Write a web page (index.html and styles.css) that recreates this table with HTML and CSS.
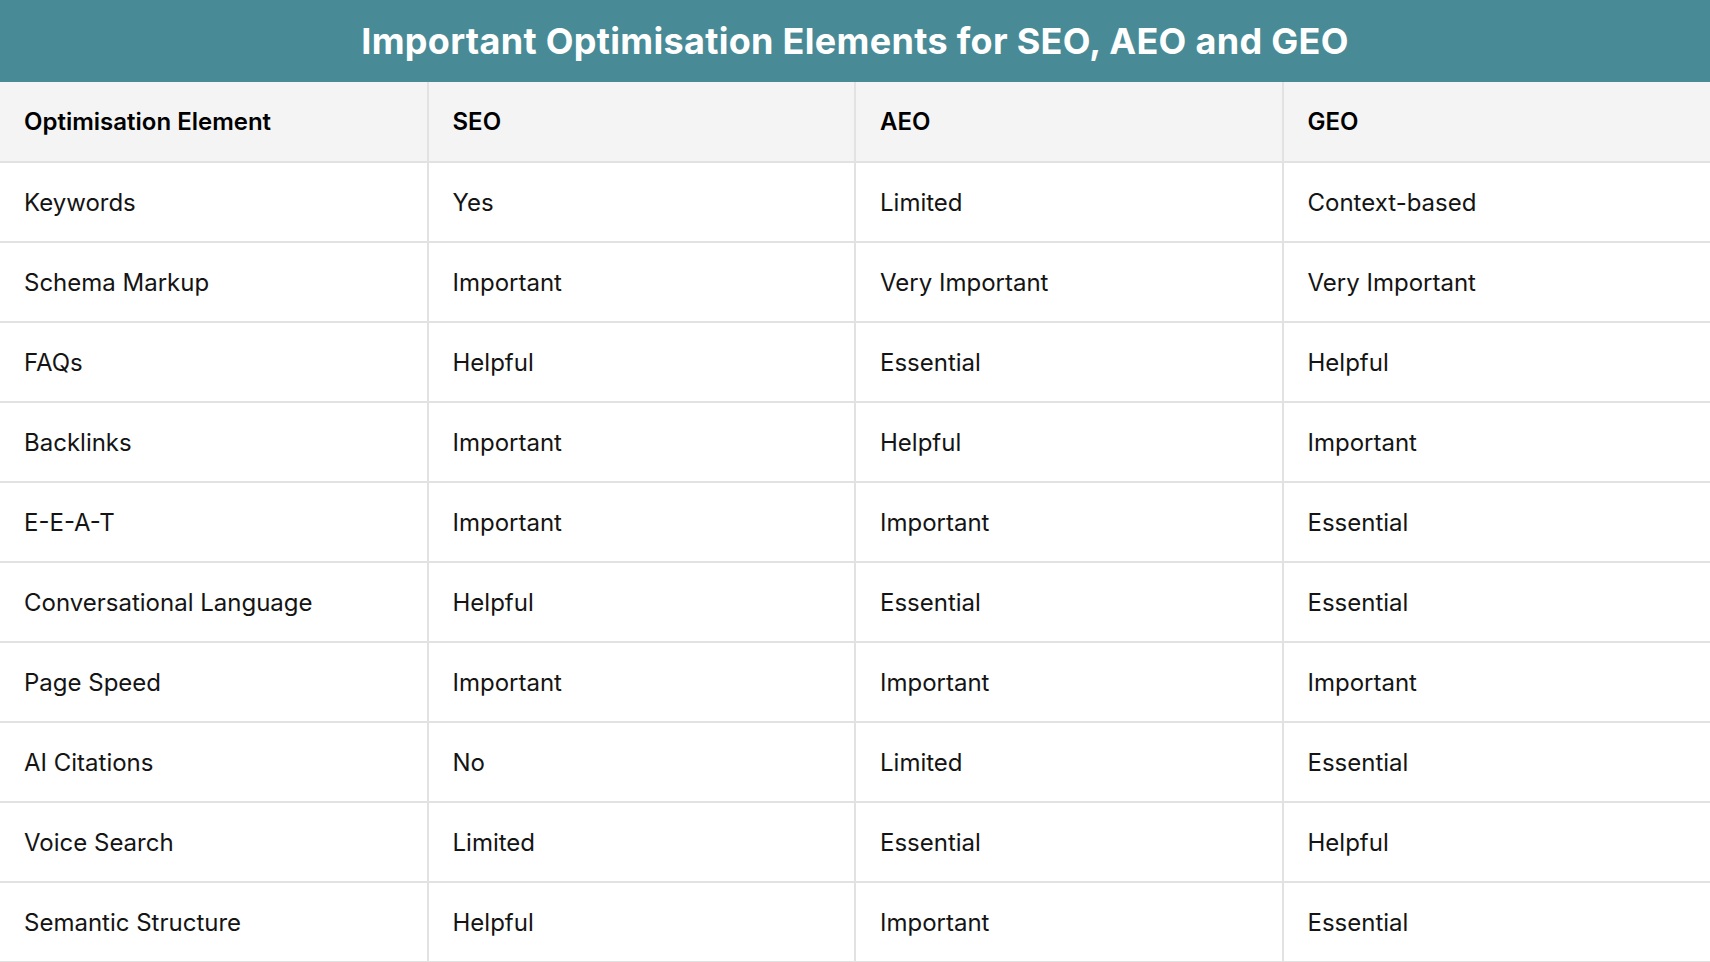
FILE: index.html
```html
<!DOCTYPE html>
<html lang="en">
<head>
<meta charset="utf-8">
<title>Important Optimisation Elements for SEO, AEO and GEO</title>
<link rel="stylesheet" href="styles.css">
</head>
<body>
<div class="page">
  <div class="title">Important Optimisation Elements for SEO, AEO and GEO</div>
  <table class="grid">
    <thead>
      <tr><th>Optimisation Element</th><th>SEO</th><th>AEO</th><th>GEO</th></tr>
    </thead>
    <tbody>
      <tr><td>Keywords</td><td>Yes</td><td>Limited</td><td>Context-based</td></tr>
      <tr><td>Schema Markup</td><td>Important</td><td>Very Important</td><td>Very Important</td></tr>
      <tr><td>FAQs</td><td>Helpful</td><td>Essential</td><td>Helpful</td></tr>
      <tr><td>Backlinks</td><td>Important</td><td>Helpful</td><td>Important</td></tr>
      <tr><td>E-E-A-T</td><td>Important</td><td>Important</td><td>Essential</td></tr>
      <tr><td>Conversational Language</td><td>Helpful</td><td>Essential</td><td>Essential</td></tr>
      <tr><td>Page Speed</td><td>Important</td><td>Important</td><td>Important</td></tr>
      <tr><td>AI Citations</td><td>No</td><td>Limited</td><td>Essential</td></tr>
      <tr><td>Voice Search</td><td>Limited</td><td>Essential</td><td>Helpful</td></tr>
      <tr><td>Semantic Structure</td><td>Helpful</td><td>Important</td><td>Essential</td></tr>
    </tbody>
  </table>
</div>
</body>
</html>
```
FILE: styles.css
```css
html, body {
  margin: 0;
  padding: 0;
  background: #ffffff;
}
body {
  font-family: Inter, "Liberation Sans", sans-serif;
  color: #111111;
}
.page {
  width: 1710px;
  height: 962px;
  overflow: hidden;
}
.title {
  height: 82px;
  background: #488b97;
  color: #ffffff;
  font-weight: 700;
  font-size: 36px;
  letter-spacing: 0.3px;
  display: flex;
  align-items: center;
  justify-content: center;
}
.grid {
  width: 100%;
  border-collapse: collapse;
  table-layout: fixed;
}
.grid th, .grid td {
  height: 80px;
  box-sizing: border-box;
  padding: 0 24px;
  text-align: left;
  vertical-align: middle;
  font-size: 24px;
  border-bottom: 2px solid #e2e2e2;
  border-right: 2px solid #e2e2e2;
}
.grid th:last-child, .grid td:last-child {
  border-right: none;
}
.grid th {
  background: #f4f4f4;
  font-weight: 600;
  color: #000000;
}
.grid td {
  font-weight: 400;
  color: #141414;
}
```
